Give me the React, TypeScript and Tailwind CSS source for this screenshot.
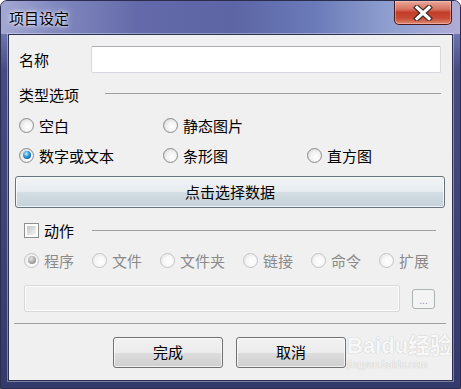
import clsx from "clsx";

const font = "font-['Noto_Sans_CJK_SC','Noto_Sans',sans-serif]";

function Radio({ checked, disabled }: { checked?: boolean; disabled?: boolean }) {
  return (
    <span
      className={clsx(
        "w-[15px] h-[15px] rounded-full border flex items-center justify-center shrink-0",
        disabled
          ? "border-[#c4c4c4] bg-[radial-gradient(circle_at_60%_60%,#ffffff_0%,#f7f7f7_45%,#e2e2e2_100%)]"
          : "border-[#8a8c8e] bg-[radial-gradient(circle_at_60%_60%,#ffffff_0%,#f4f4f4_40%,#cdcdcd_100%)]"
      )}
    >
      {checked && (
        <span
          className={clsx(
            "w-[8px] h-[8px] rounded-full",
            disabled
              ? "bg-[radial-gradient(circle_at_40%_35%,#e8e8e8_0%,#a6a6a6_55%,#7c7c7c_100%)]"
              : "bg-[radial-gradient(circle_at_40%_35%,#c9ecff_0%,#2a94dc_45%,#0b3a66_100%)]"
          )}
        />
      )}
    </span>
  );
}

function RadioLabel({
  label,
  checked,
  disabled,
  className,
}: {
  label: string;
  checked?: boolean;
  disabled?: boolean;
  className?: string;
}) {
  return (
    <div className={clsx("flex items-center gap-[5px] h-[16px] shrink-0", className)}>
      <Radio checked={checked} disabled={disabled} />
      <span className={clsx("text-[15px] leading-none whitespace-nowrap", disabled ? "text-[#8a8a8a]" : "text-black")}>
        {label}
      </span>
    </div>
  );
}

function WinButton({ label, className }: { label: string; className?: string }) {
  return (
    <button
      className={clsx(
        "h-[31px] w-[110px] rounded-[3px] border border-[#707070] text-[15px] text-black flex items-center justify-center",
        "bg-[linear-gradient(to_bottom,#f2f2f2_0%,#ebebeb_50%,#dddddd_51%,#cfcfcf_100%)] shadow-[inset_0_0_0_1px_rgba(255,255,255,0.7)]",
        className
      )}
    >
      {label}
    </button>
  );
}

const actions = [
  { label: "程序", w: "w-[68px]" },
  { label: "文件", w: "w-[68px]" },
  { label: "文件夹", w: "w-[83px]" },
  { label: "链接", w: "w-[68px]" },
  { label: "命令", w: "w-[68px]" },
  { label: "扩展", w: "w-[68px]" },
];

export default function App() {
  return (
    <div className={clsx("w-[461px] h-[389px] bg-white", font)}>
      <div className="relative w-[461px] h-[389px] rounded-t-[7px] border border-[#2a2d4e] bg-[linear-gradient(to_bottom,#8f95c6_0px,#7078b4_30px,#464c82_70px,#353a6c_100%)] flex flex-col overflow-hidden">
        {/* Title bar */}
        <div className="h-[33px] shrink-0 flex items-start justify-between bg-[linear-gradient(to_right,#a3a8d2_0%,#8188bf_12%,#646aa9_30%,#5d65a4_50%,#6a7ab8_68%,#8fa0d0_85%,#b0acd6_100%)]">
          <span className="ml-[8px] mt-[8px] text-[15px] leading-[18px] text-black [text-shadow:0_0_6px_rgba(255,255,255,0.9),0_0_3px_rgba(255,255,255,0.9)]">
            项目设定
          </span>
          <button className="mr-[8px] mt-0 w-[58px] h-[24px] rounded-b-[5px] border border-t-0 border-[#4a1a1a] bg-[linear-gradient(to_bottom,#e9a89a_0%,#d87562_35%,#c33d2a_50%,#c84a36_75%,#de8a74_100%)] shadow-[inset_0_0_0_1px_rgba(255,210,200,0.45)] flex items-center justify-center">
            <svg width="22" height="16" viewBox="0 0 22 16">
              <path d="M5 2.5 L17 13.5 M17 2.5 L5 13.5" stroke="#3b2a2a" strokeWidth="5.5" strokeLinecap="square" />
              <path d="M5 2.5 L17 13.5 M17 2.5 L5 13.5" stroke="#ffffff" strokeWidth="3.2" strokeLinecap="square" />
            </svg>
          </button>
        </div>

        {/* Client area */}
        <div className="mx-[7px] h-[347px] border border-[#2e3252] bg-[#f0f0f0] shadow-[0_0_0_1px_rgba(255,255,255,0.35)] flex flex-col">
          {/* Name */}
          <div className="mt-[11px] h-[27px] flex items-center">
            <span className="ml-[10px] w-[72px] text-[15px] text-black leading-none">名称</span>
            <div className="w-[350px] h-[27px] bg-white border border-[#d5d8de] border-t-[#abadb3] rounded-[2px]" />
          </div>

          {/* Type header */}
          <div className="mt-[13px] h-[16px] flex items-center">
            <span className="ml-[10px] text-[15px] leading-none text-black">类型选项</span>
            <div className="ml-[26px] w-[336px] h-px bg-[#a0a0a0] -mt-[2px]" />
          </div>

          <div className="mt-[15px] flex">
            <RadioLabel className="ml-[10px] w-[144px]" label="空白" />
            <RadioLabel label="静态图片" />
          </div>
          <div className="mt-[14px] flex">
            <RadioLabel className="ml-[10px] w-[144px]" label="数字或文本" checked />
            <RadioLabel className="w-[144px]" label="条形图" />
            <RadioLabel label="直方图" />
          </div>

          <button className="mt-[13px] ml-[6px] w-[430px] h-[32px] rounded-[3px] border border-[#667480] bg-[linear-gradient(to_bottom,#f1f4f6_0%,#e6ecf0_48%,#d3dde3_52%,#c6d2da_100%)] shadow-[inset_0_0_0_1px_rgba(255,255,255,0.75)] text-[15px] text-black flex items-center justify-center">
            点击选择数据
          </button>

          {/* Action header */}
          <div className="mt-[14px] h-[16px] flex items-center">
            <span className="ml-[15px] w-[15px] h-[15px] border border-[#8e8f8f] bg-white p-[2px] shrink-0">
              <span className="block w-full h-full bg-[linear-gradient(135deg,#c4c4c4_0%,#e2e2e2_60%,#f4f4f4_100%)]" />
            </span>
            <span className="ml-[5px] text-[15px] leading-none text-black">动作</span>
            <div className="ml-[18px] w-[344px] h-px bg-[#a0a0a0]" />
          </div>

          <div className="mt-[14px] flex ml-[15px]">
            {actions.map((a, i) => (
              <RadioLabel key={a.label} className={a.w} label={a.label} checked={i === 0} disabled />
            ))}
          </div>

          {/* Path */}
          <div className="mt-[17px] h-[27px] flex items-center">
            <div className="ml-[15px] w-[376px] h-[27px] border border-[#d9d9d9] rounded-[2px] bg-[#f0f0f0] shadow-[inset_0_0_0_1px_#fbfbfb]" />
            <div className="ml-[12px] w-[23px] h-[20px] rounded-[3px] border border-[#adb2b5] bg-[#f4f4f4] flex items-end justify-center pb-[3px]">
              <span className="text-[10px] leading-none text-[#8da0b8]">...</span>
            </div>
          </div>

          <div className="mt-[11px] ml-[5px] w-[432px] h-px bg-[#a0a0a0]" />

          <div className="mt-[13px] ml-[104px] flex gap-[13px]">
            <WinButton label="完成" />
            <WinButton label="取消" />
          </div>
        </div>

        {/* Watermark */}
        <div className="absolute left-[346px] top-[332px] flex flex-col items-start pointer-events-none select-none">
          <span className="font-['Liberation_Sans','Noto_Sans_CJK_SC',sans-serif] font-bold text-[22px] leading-[26px] text-[#f7f7f7] [text-shadow:0_0_1px_#c8c8c8,0_0_1px_#c8c8c8]">
            Baidu经验
          </span>
          <span className="font-['Liberation_Sans',sans-serif] text-[10px] leading-[12px] text-[#f7f7f7] [text-shadow:0_0_1px_#c8c8c8,0_0_1px_#c8c8c8]">
            jingyan.baidu.com
          </span>
        </div>
      </div>
    </div>
  );
}
